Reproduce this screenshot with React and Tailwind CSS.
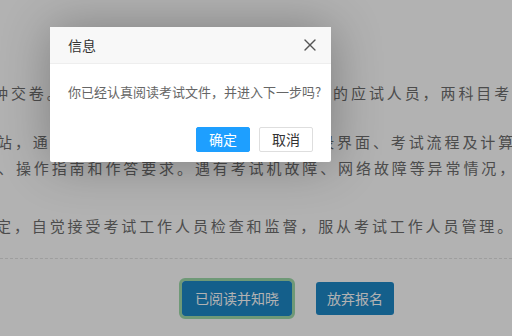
import { X } from 'lucide-react'

const cjk = { fontFamily: '"Noto Sans CJK SC", "Liberation Sans", sans-serif' }

function Line({ offset, children, className = '' }) {
  return (
    <div className={`whitespace-nowrap leading-[26px] ${className}`} style={{ marginLeft: offset }}>
      {children}
    </div>
  )
}

export default function App() {
  return (
    <div className="relative h-[336px] w-[512px] overflow-hidden bg-white" style={cjk}>
      {/* page behind the dialog */}
      <div className="pt-[80px] text-[15px] tracking-[2.9px] text-[#6e6e6e]">
        <Line offset={-7}>种交卷。考试开始后迟到三十分钟以上到场的应试人员，两科目考试均不得入场。</Line>
        <Line offset={-3} className="mt-[23px]">站，通过模拟系统提前熟悉考试环境、登录界面、考试流程及计算器的使用方法。</Line>
        <Line offset={-2}>、操作指南和作答要求。遇有考试机故障、网络故障等异常情况，</Line>
        <Line offset={-4} className="mt-[32px]">定，自觉接受考试工作人员检查和监督，服从考试工作人员管理。</Line>
        <div className="mt-[19px] border-t border-dashed border-[#e2e2e2]" />
        <div className="mt-[22px] flex gap-[24px] pl-[182px]">
          <button className="h-[35px] rounded-[3px] bg-[#1e88c8] px-[13px] text-[14px] tracking-normal text-white outline outline-[3px] outline-[#a0dcab]">
            已阅读并知晓
          </button>
          <button className="mt-px h-[33px] rounded-[3px] bg-[#1e88c8] px-[11px] text-[14px] tracking-normal text-white">
            放弃报名
          </button>
        </div>
      </div>

      {/* shade */}
      <div className="absolute inset-0 bg-black/30" />

      {/* dialog */}
      <div className="absolute left-[50px] top-[27px] w-[281px] rounded-[2px] bg-white shadow-[1px_1px_50px_rgba(0,0,0,0.3)]">
        <div className="flex h-[37px] items-center justify-between border-b border-[#eeeeee] bg-[#f8f8f8] pl-[18px] pr-[11px] text-[14px] text-[#333]">
          <span>信息</span>
          <X size={20} strokeWidth={1.6} className="text-[#555]" />
        </div>
        <div className="whitespace-nowrap px-[18px] pb-[23px] pt-[16px] text-[13px] leading-[24px] text-[#666]">
          你已经认真阅读考试文件，并进入下一步吗?
        </div>
        <div className="flex justify-end gap-[9px] pb-[10px] pr-[18px]">
          <button className="h-[25px] w-[54px] rounded-[2px] border border-[#1e9fff] bg-[#1e9fff] text-[14px] text-white">确定</button>
          <button className="h-[25px] w-[54px] rounded-[2px] border border-[#dedede] bg-white text-[14px] text-[#333]">取消</button>
        </div>
      </div>
    </div>
  )
}
